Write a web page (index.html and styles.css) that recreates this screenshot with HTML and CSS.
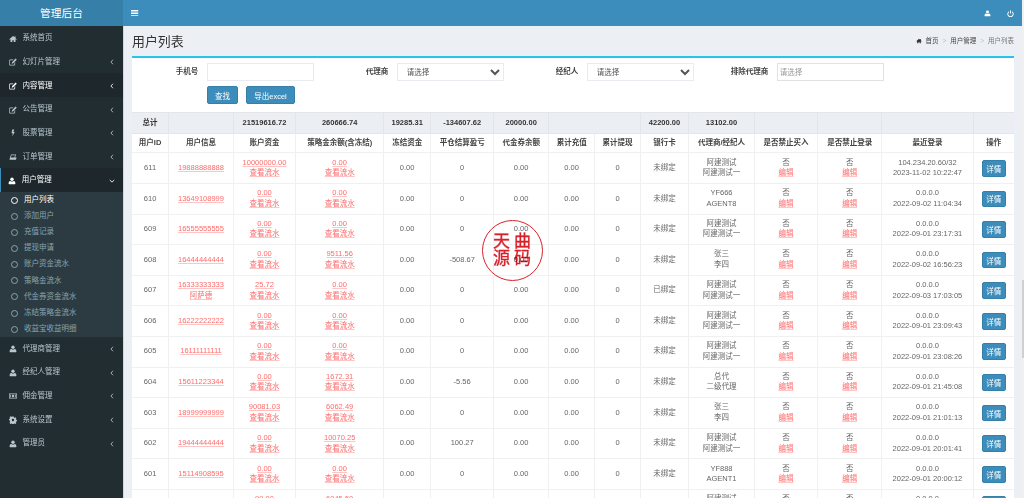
FILE: index.html
```html
<!DOCTYPE html>
<html lang="zh-CN">
<head>
<meta charset="utf-8">
<title>用户列表</title>
<link rel="stylesheet" href="styles.css">
</head>
<body>
<svg class="defs" width="0" height="0" aria-hidden="true">
  <symbol id="i-home" viewBox="0 0 16 16"><path d="M8 2 0.5 8.500l1 1L3 8.300V14h3.600v-3.600h2.800V14H13V8.300l1.500 1.200 1-1L13 6.300V2.600h-2v2L8 2z"/></symbol>
  <symbol id="i-edit" viewBox="0 0 16 16"><path d="M2.500 3H9L7.600 4.400H2.800a.9.9 0 0 0-.9.9v7.200c0 .5.4.9.9.9H10a.9.9 0 0 0 .9-.9V9.400l1.400-1.400v5a2 2 0 0 1-2 2H2.500a2 2 0 0 1-2-2V5a2 2 0 0 1 2-2z"/><path d="M13.200 1.200 15.500 3.500 8.400 10.600l-3 .7.7-3z"/></symbol>
  <symbol id="i-bolt" viewBox="0 0 16 16"><path d="M6.500 1h4L8.600 5.800h2.900L6.400 15l1.300-6.600H5z"/></symbol>
  <symbol id="i-hdd" viewBox="0 0 16 16"><path d="M4 3h10l-1.800 6H15l-1 4.500H1L2 9h0.200zM5 4.400 3.600 9h7.200l1.300-4.600z"/></symbol>
  <symbol id="i-user" viewBox="0 0 16 16"><circle cx="8" cy="4.600" r="3.400"/><path d="M2.200 14.500c-.6 0-1-.4-1-1 0-3 .8-5.200 3.400-5.400 1 .7 2.100 1 3.400 1s2.400-.3 3.400-1c2.600.2 3.400 2.400 3.400 5.400 0 .6-.4 1-1 1z"/></symbol>
  <symbol id="i-money" viewBox="0 0 16 16"><path fill-rule="evenodd" d="M0 3h16v10H0zM1.300 4.300v7.400h13.400V4.300z"/><circle cx="8" cy="8" r="2.400"/><path d="M2.500 5.500h1.500v5H2.500zM12 5.500h1.500v5H12z"/></symbol>
  <symbol id="i-cog" viewBox="0 0 16 16"><path fill-rule="evenodd" d="M6.600 1h2.800l.4 2 1.300.6 1.800-1.100 2 2-1.100 1.800.5 1.300 2 .4v2.800l-2 .4-.5 1.300 1.100 1.800-2 2-1.800-1.100-1.300.5-.4 2H6.600l-.4-2-1.300-.5-1.800 1.100-2-2L2.200 10.300l-.5-1.300-2-.4V5.800l2-.4.5-1.300L1.100 2.300l2-2 1.800 1.100 1.300-.5zM8 5.600a2.400 2.400 0 1 0 0 4.800 2.400 2.400 0 0 0 0-4.800z" transform="translate(.1 .1) scale(.98)"/></symbol>
  <symbol id="i-left" viewBox="0 0 8 12"><path d="M6 1.500 1.800 6 6 10.500" fill="none" stroke="currentColor" stroke-width="1.700"/></symbol>
  <symbol id="i-down" viewBox="0 0 12 8"><path d="M1.500 2 6 6.200 10.500 2" fill="none" stroke="currentColor" stroke-width="1.700"/></symbol>
  <symbol id="i-bars" viewBox="0 0 14 12"><path d="M0 0h14v2.500H0zM0 4.700h14v2.500H0zM0 9.500h14V12H0z"/></symbol>
  <symbol id="i-power" viewBox="0 0 16 16"><path d="M6.800 1h2.400v7H6.800z"/><path d="M4.600 2.800v2.700a5 5 0 1 0 6.800 0V2.800a7.300 7.300 0 1 1-6.800 0z"/></symbol>
</svg>

<div class="app">
  <aside class="sidebar">
    <div class="logo">管理后台</div>
    <nav class="menu">
      <a class="item"><svg class="ico"><use href="#i-home"/></svg><span>系统首页</span></a>
      <a class="item"><svg class="ico"><use href="#i-edit"/></svg><span>幻灯片管理</span><svg class="chev"><use href="#i-left"/></svg></a>
      <a class="item hover"><svg class="ico"><use href="#i-edit"/></svg><span>内容管理</span><svg class="chev"><use href="#i-left"/></svg></a>
      <a class="item"><svg class="ico"><use href="#i-edit"/></svg><span>公告管理</span><svg class="chev"><use href="#i-left"/></svg></a>
      <a class="item"><svg class="ico"><use href="#i-bolt"/></svg><span>股票管理</span><svg class="chev"><use href="#i-left"/></svg></a>
      <a class="item"><svg class="ico"><use href="#i-hdd"/></svg><span>订单管理</span><svg class="chev"><use href="#i-left"/></svg></a>
      <a class="item active"><svg class="ico"><use href="#i-user"/></svg><span>用户管理</span><svg class="chev-down"><use href="#i-down"/></svg></a>
      <div class="submenu">
        <a class="sub current"><i class="ring"></i>用户列表</a>
        <a class="sub"><i class="ring"></i>添加用户</a>
        <a class="sub"><i class="ring"></i>充值记录</a>
        <a class="sub"><i class="ring"></i>提现申请</a>
        <a class="sub"><i class="ring"></i>账户资金流水</a>
        <a class="sub"><i class="ring"></i>策略金流水</a>
        <a class="sub"><i class="ring"></i>代金券资金流水</a>
        <a class="sub"><i class="ring"></i>冻结策略金流水</a>
        <a class="sub"><i class="ring"></i>收益宝收益明细</a>
      </div>
      <a class="item"><svg class="ico"><use href="#i-user"/></svg><span>代理商管理</span><svg class="chev"><use href="#i-left"/></svg></a>
      <a class="item"><svg class="ico"><use href="#i-user"/></svg><span>经纪人管理</span><svg class="chev"><use href="#i-left"/></svg></a>
      <a class="item"><svg class="ico"><use href="#i-money"/></svg><span>佣金管理</span><svg class="chev"><use href="#i-left"/></svg></a>
      <a class="item"><svg class="ico"><use href="#i-cog"/></svg><span>系统设置</span><svg class="chev"><use href="#i-left"/></svg></a>
      <a class="item"><svg class="ico"><use href="#i-user"/></svg><span>管理员</span><svg class="chev"><use href="#i-left"/></svg></a>
    </nav>
  </aside>

  <div class="main">
    <header class="topbar">
      <svg class="bars"><use href="#i-bars"/></svg>
      <div class="top-actions">
        <svg class="top-ico"><use href="#i-user"/></svg>
        <svg class="top-ico"><use href="#i-power"/></svg>
      </div>
    </header>

    <div class="content">
      <div class="page-head">
        <h1>用户列表</h1>
        <ol class="crumbs">
          <li><svg class="crumb-ico"><use href="#i-home"/></svg>首页</li>
          <li class="sep">&gt;</li>
          <li>用户管理</li>
          <li class="sep">&gt;</li>
          <li class="last">用户列表</li>
        </ol>
      </div>

      <section class="box">
        <form class="filters">
          <div class="fields">
            <label class="field"><span>手机号</span><input class="ctl" type="text"></label>
            <label class="field"><span>代理商</span><select class="ctl sel"><option>请选择</option></select></label>
            <label class="field"><span>经纪人</span><select class="ctl sel"><option>请选择</option></select></label>
            <label class="field"><span>排除代理商</span><input class="ctl strong" type="text" placeholder="请选择"></label>
          </div>
          <div class="actions">
            <button class="btn" type="button">查找</button>
            <button class="btn" type="button">导出excel</button>
          </div>
        </form>

        <table class="grid">
          <colgroup><col><col><col><col><col><col><col><col><col><col><col><col><col><col><col></colgroup>
          <thead>
            <tr class="total">
              <th>总计</th><th></th><th>21519616.72</th><th>260666.74</th><th>19285.31</th><th>-134607.62</th><th>20000.00</th><th colspan="2"></th><th>42200.00</th><th>13102.00</th><th></th><th></th><th></th><th></th>
            </tr>
            <tr class="head">
              <th>用户ID</th><th>用户信息</th><th>账户资金</th><th>策略金余额(含冻结)</th><th>冻结资金</th><th>平仓结算盈亏</th><th>代金券余额</th><th>累计充值</th><th>累计提现</th><th>银行卡</th><th>代理商/经纪人</th><th>是否禁止买入</th><th>是否禁止登录</th><th>最近登录</th><th>操作</th>
            </tr>
          </thead>
          <tbody>
            <tr><td>611</td><td><a>19888888888</a></td><td><a>10000000.00</a><br><a>查看流水</a></td><td><a>0.00</a><br><a>查看流水</a></td><td>0.00</td><td>0</td><td>0.00</td><td>0.00</td><td>0</td><td>未绑定</td><td>阿建测试<br>阿建测试一</td><td>否<br><a>编辑</a></td><td>否<br><a>编辑</a></td><td>104.234.20.60/32<br>2023-11-02 10:22:47</td><td><button class="btn small" type="button">详情</button></td></tr>
            <tr><td>610</td><td><a>13649108999</a></td><td><a>0.00</a><br><a>查看流水</a></td><td><a>0.00</a><br><a>查看流水</a></td><td>0.00</td><td>0</td><td>0.00</td><td>0.00</td><td>0</td><td>未绑定</td><td>YF666<br>AGENT8</td><td>否<br><a>编辑</a></td><td>否<br><a>编辑</a></td><td>0.0.0.0<br>2022-09-02 11:04:34</td><td><button class="btn small" type="button">详情</button></td></tr>
            <tr><td>609</td><td><a>16555555555</a></td><td><a>0.00</a><br><a>查看流水</a></td><td><a>0.00</a><br><a>查看流水</a></td><td>0.00</td><td>0</td><td>0.00</td><td>0.00</td><td>0</td><td>未绑定</td><td>阿建测试<br>阿建测试一</td><td>否<br><a>编辑</a></td><td>否<br><a>编辑</a></td><td>0.0.0.0<br>2022-09-01 23:17:31</td><td><button class="btn small" type="button">详情</button></td></tr>
            <tr><td>608</td><td><a>16444444444</a></td><td><a>0.00</a><br><a>查看流水</a></td><td><a>9511.56</a><br><a>查看流水</a></td><td>0.00</td><td>-508.67</td><td>0.00</td><td>0.00</td><td>0</td><td>未绑定</td><td>张三<br>李四</td><td>否<br><a>编辑</a></td><td>否<br><a>编辑</a></td><td>0.0.0.0<br>2022-09-02 16:56:23</td><td><button class="btn small" type="button">详情</button></td></tr>
            <tr><td>607</td><td><a>16333333333</a><br><a>阿萨德</a></td><td><a>25.72</a><br><a>查看流水</a></td><td><a>0.00</a><br><a>查看流水</a></td><td>0.00</td><td>0</td><td>0.00</td><td>0.00</td><td>0</td><td>已绑定</td><td>阿建测试<br>阿建测试一</td><td>否<br><a>编辑</a></td><td>否<br><a>编辑</a></td><td>0.0.0.0<br>2022-09-03 17:03:05</td><td><button class="btn small" type="button">详情</button></td></tr>
            <tr><td>606</td><td><a>16222222222</a></td><td><a>0.00</a><br><a>查看流水</a></td><td><a>0.00</a><br><a>查看流水</a></td><td>0.00</td><td>0</td><td>0.00</td><td>0.00</td><td>0</td><td>未绑定</td><td>阿建测试<br>阿建测试一</td><td>否<br><a>编辑</a></td><td>否<br><a>编辑</a></td><td>0.0.0.0<br>2022-09-01 23:09:43</td><td><button class="btn small" type="button">详情</button></td></tr>
            <tr><td>605</td><td><a>16111111111</a></td><td><a>0.00</a><br><a>查看流水</a></td><td><a>0.00</a><br><a>查看流水</a></td><td>0.00</td><td>0</td><td>0.00</td><td>0.00</td><td>0</td><td>未绑定</td><td>阿建测试<br>阿建测试一</td><td>否<br><a>编辑</a></td><td>否<br><a>编辑</a></td><td>0.0.0.0<br>2022-09-01 23:08:26</td><td><button class="btn small" type="button">详情</button></td></tr>
            <tr><td>604</td><td><a>15611223344</a></td><td><a>0.00</a><br><a>查看流水</a></td><td><a>1672.31</a><br><a>查看流水</a></td><td>0.00</td><td>-5.56</td><td>0.00</td><td>0.00</td><td>0</td><td>未绑定</td><td>总代<br>二级代理</td><td>否<br><a>编辑</a></td><td>否<br><a>编辑</a></td><td>0.0.0.0<br>2022-09-01 21:45:08</td><td><button class="btn small" type="button">详情</button></td></tr>
            <tr><td>603</td><td><a>18999999999</a></td><td><a>90081.03</a><br><a>查看流水</a></td><td><a>6062.49</a><br><a>查看流水</a></td><td>0.00</td><td>0</td><td>0.00</td><td>0.00</td><td>0</td><td>未绑定</td><td>张三<br>李四</td><td>否<br><a>编辑</a></td><td>否<br><a>编辑</a></td><td>0.0.0.0<br>2022-09-01 21:01:13</td><td><button class="btn small" type="button">详情</button></td></tr>
            <tr><td>602</td><td><a>19444444444</a></td><td><a>0.00</a><br><a>查看流水</a></td><td><a>10070.25</a><br><a>查看流水</a></td><td>0.00</td><td>100.27</td><td>0.00</td><td>0.00</td><td>0</td><td>未绑定</td><td>阿建测试<br>阿建测试一</td><td>否<br><a>编辑</a></td><td>否<br><a>编辑</a></td><td>0.0.0.0<br>2022-09-01 20:01:41</td><td><button class="btn small" type="button">详情</button></td></tr>
            <tr><td>601</td><td><a>15114908595</a></td><td><a>0.00</a><br><a>查看流水</a></td><td><a>0.00</a><br><a>查看流水</a></td><td>0.00</td><td>0</td><td>0.00</td><td>0.00</td><td>0</td><td>未绑定</td><td>YF888<br>AGENT1</td><td>否<br><a>编辑</a></td><td>否<br><a>编辑</a></td><td>0.0.0.0<br>2022-09-01 20:00:12</td><td><button class="btn small" type="button">详情</button></td></tr>
            <tr><td>600</td><td><a>15100000000</a></td><td><a>99.00</a><br><a>查看流水</a></td><td><a>6045.50</a><br><a>查看流水</a></td><td>0.00</td><td>0</td><td>0.00</td><td>0.00</td><td>0</td><td>未绑定</td><td>阿建测试<br>阿建测试一</td><td>否<br><a>编辑</a></td><td>否<br><a>编辑</a></td><td>0.0.0.0<br>2022-09-01 19:58:02</td><td><button class="btn small" type="button">详情</button></td></tr>
          </tbody>
        </table>
      </section>
    </div>
  </div>

  <div class="stamp" aria-label="天曲源码"><span>天</span><span>曲</span><span>源</span><span>码</span></div>
  <div class="scroll-track"><div class="scroll-thumb"></div></div>
</div>
</body>
</html>
```

FILE: styles.css
```css
* { box-sizing: border-box; }
html, body { margin: 0; height: 498px; overflow: hidden; }
body {
  font-family: "Liberation Sans", "Noto Sans CJK SC", sans-serif;
  font-size: 7.5px;
  line-height: 10.7px;
  color: #333;
  background: #ecf0f5;
}
.defs { position: absolute; }

.app {
  position: relative;
  display: grid;
  grid-template-columns: 123px 1fr;
  height: 498px;
  overflow: hidden;
  filter: blur(0.35px);
}

/* sidebar */
.sidebar { background: #222d32; color: #b8c7ce; height: 498px; border-right: 1px solid #d3d6db; width: 124px; }
.logo {
  height: 26px;
  background: #367fa9;
  color: #fff;
  font-size: 10.7px;
  line-height: 26px;
  text-align: center;
}
.menu { display: flex; flex-direction: column; }
.item {
  display: flex;
  align-items: center;
  height: 23.67px;
  padding: 1.5px 9px 0;
  position: relative;
}
.item span { flex: 1; margin-left: 5.5px; }
.item.hover { background: #1e282c; color: #fff; }
.item.active { background: #1e282c; color: #fff; border-left: 1.7px solid #3c8dbc; padding-left: 7.3px; }
.ico { width: 8px; height: 8px; fill: currentColor; flex: none; }
.chev { width: 4px; height: 6px; flex: none; }
.chev-down { width: 6px; height: 4px; flex: none; margin-right: -1px; }
.submenu { background: #2c3b41; height: 145px; display: flex; flex-direction: column; }
.sub {
  display: flex;
  align-items: center;
  height: 16.1px;
  color: #8aa4af;
  padding: 1.5px 0 0 11px;
}
.sub.current { color: #fff; }
.ring {
  width: 7px;
  height: 7px;
  border: 1.3px solid currentColor;
  border-radius: 50%;
  margin-right: 6px;
  flex: none;
}

/* main */
.main { min-width: 0; }
.topbar {
  height: 26px;
  background: #3c8dbc;
  display: flex;
  align-items: center;
  justify-content: space-between;
  padding: 0 10.5px 0 8px;
  color: #fff;
}
.bars { width: 7.5px; height: 6.5px; fill: currentColor; }
.top-actions { display: flex; gap: 16px; }
.top-ico { width: 7px; height: 7px; fill: currentColor; }

.content { padding: 0 10px 0 9px; }
.page-head {
  height: 30px;
  padding-top: 1.5px;
  display: flex;
  align-items: center;
  justify-content: space-between;
}
.page-head h1 { margin: 0; font-size: 12.9px; font-weight: 400; line-height: 16px; color: #333; }
.crumbs {
  list-style: none;
  margin: 0;
  padding: 0;
  display: flex;
  gap: 4px;
  font-size: 6.5px;
  color: #444;
  align-items: center;
}
.crumbs .sep { color: #bbb; }
.crumbs .last { color: #777; }
.crumb-ico { width: 6px; height: 6px; fill: #333; margin-right: 3px; vertical-align: -0.5px; }

.box { background: #fff; border-top: 2px solid #26c6ea; }
.filters { padding: 5px 0 7.7px; }
.fields { display: grid; grid-template-columns: 182px 190px 190px 190px; }
.field {
  display: grid;
  grid-template-columns: 1fr 107.3px;
  column-gap: 8.5px;
  align-items: center;
  text-align: right;
  font-weight: 700;
  color: #444;
}
.field span { padding-top: 1px; }
.ctl {
  height: 18.3px;
  width: 107.3px;
  border: 1px solid #e8ebef;
  background: #fff;
  font: 400 7.5px "Liberation Sans", "Noto Sans CJK SC", sans-serif;
  color: #555;
  padding: 0 2px;
  border-radius: 0;
  outline: none;
}
.sel { padding-left: 5px; }
.strong { border-color: #e2e2e2; }
.ctl::placeholder { color: #999; }
.actions { display: flex; gap: 7.7px; padding-left: 74.7px; margin-top: 4.7px; }
.btn {
  height: 18.3px;
  padding: 1px 7.3px 0;
  background: #3c8dbc;
  border: 1px solid #367fa9;
  border-radius: 2px;
  color: #fff;
  font: 400 7.5px "Liberation Sans", "Noto Sans CJK SC", sans-serif;
  min-width: 29px;
}
.btn.small { height: 16.7px; padding: 0; width: 24.7px; min-width: 0; }

/* table */
.grid { width: 882px; table-layout: fixed; border-collapse: collapse; text-align: center; }
.grid col:nth-child(1) { width: 36.7px; }
.grid col:nth-child(2) { width: 64.6px; }
.grid col:nth-child(3) { width: 62.4px; }
.grid col:nth-child(4) { width: 88px; }
.grid col:nth-child(5) { width: 47px; }
.grid col:nth-child(6) { width: 63px; }
.grid col:nth-child(7) { width: 55px; }
.grid col:nth-child(8) { width: 46px; }
.grid col:nth-child(9) { width: 45.6px; }
.grid col:nth-child(10) { width: 48.4px; }
.grid col:nth-child(11) { width: 65.6px; }
.grid col:nth-child(12) { width: 63.4px; }
.grid col:nth-child(13) { width: 64px; }
.grid col:nth-child(14) { width: 91.6px; }
.grid col:nth-child(15) { width: 40.7px; }
.grid th, .grid td { border: 1px solid #eff0f2; padding: 0; vertical-align: middle; }
.grid th:first-child, .grid td:first-child { border-left: 0; }
.grid th:last-child, .grid td:last-child { border-right: 0; }
.total th { height: 21px; background: #ebeef3; border-color: #e2e6ea; color: #333; font-weight: 700; }
.head th { height: 19.5px; font-weight: 700; color: #444; }
.grid td { height: 30.6px; color: #666; }
.grid a { color: #ff6b6b; text-decoration: underline; text-decoration-color: #ffc4c4; }

/* seal */
.stamp {
  position: absolute;
  left: 481.5px;
  top: 219.5px;
  width: 61px;
  height: 61px;
  border: 1.5px solid #d9212a;
  border-radius: 50%;
  color: #d9212a;
  display: grid;
  grid-template-columns: 17px 17px;
  grid-auto-rows: 17.5px;
  column-gap: 4px;
  justify-content: center;
  align-content: center;
  font-size: 17px;
  font-weight: 400;
  -webkit-text-stroke: 0.35px #d9212a;
  line-height: 17.5px;
  text-align: center;
  mix-blend-mode: multiply;
}

/* window scrollbar */
.scroll-track { position: absolute; top: 0; right: 0; bottom: 0; width: 2px; background: #f1f1f1; }
.scroll-thumb { position: absolute; top: 280px; left: 0; right: 0; height: 78px; background: #d0d0d0; }
```
